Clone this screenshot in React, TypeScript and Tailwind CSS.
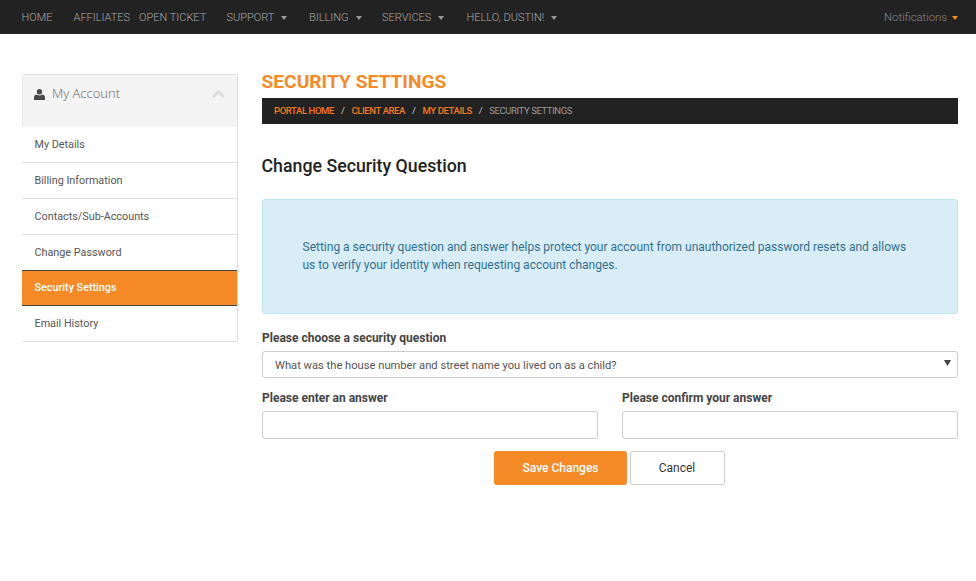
import React from "react";

const Caret = ({ c = "#999", ml = 7 }: { c?: string; ml?: number }) => (
  <span className="inline-block align-middle w-0 h-0 border-t-[4px] border-x-[3.5px] border-x-transparent" style={{ borderTopColor: c, marginLeft: ml }} />
);

const side = ["My Details", "Billing Information", "Contacts/Sub-Accounts"];
const rowText = "flex items-center pl-[12.500px] pt-[2px] text-[10.800px] text-[#555]";

export default function App() {
  return (
    <div className="w-[976px] h-[581px] bg-white overflow-hidden font-['Roboto','Liberation_Sans',sans-serif] text-[#333]">
      <header className="h-[34px] bg-[#222] flex items-center justify-between pl-[21.500px] pr-[18px] pt-[2px] text-[11px] font-light text-[#a8a8a8]">
        <nav className="flex">
          <span className="w-[52px]">HOME</span>
          <span className="w-[65.500px]">AFFILIATES</span>
          <span className="w-[87.500px]">OPEN TICKET</span>
          <span className="w-[82.500px]">SUPPORT<Caret /></span>
          <span className="w-[73px]">BILLING<Caret /></span>
          <span className="w-[84.500px]">SERVICES<Caret /></span>
          <span>HELLO, DUSTIN!<Caret /></span>
        </nav>
        <span className="text-[11.300px] text-[#888]">Notifications<Caret c="#f68b25" ml={5} /></span>
      </header>
      <div className="flex pl-[22px] pr-[18px] pt-[40px] gap-[24px]">
        <aside className="w-[216px] shrink-0">
          <div className="border-y border-r border-y-[#ddd] border-r-[#ddd] rounded-[3px] overflow-hidden">
            <div className="h-[52px] bg-[#f4f4f4] border-l border-[#e4e4e4] flex items-start justify-between pl-[11px] pr-[12px] pt-[12px] text-[13px] font-['Open_Sans',sans-serif] font-light text-[#666]">
              <span className="flex items-center gap-[7px] h-[14px]">
                <svg width="11" height="11" viewBox="0 0 11 11" fill="#4a4a4a"><ellipse cx="5.500" cy="2.800" rx="2.700" ry="2.800" /><path d="M0 11V8.500C0 6.800 1.200 5.800 2.500 5.500c.8.700 1.900 1 3 1s2.200-.3 3-1C9.800 5.800 11 6.800 11 8.500V11z" /></svg>
                My Account
              </span>
              <svg className="mt-[3px] ml-[-1px]" width="13" height="8" viewBox="0 0 13 8" fill="none" stroke="#dcdcdc" strokeWidth="2.800"><path d="M1 7l5.500-5.200L12 7" /></svg>
            </div>
            {side.map((s) => (
              <div key={s} className={`h-[36px] border-b border-[#ddd] ${rowText}`}>{s}</div>
            ))}
            <div className={`h-[36px] border-b border-[#444] ${rowText}`}>Change Password</div>
            <div className="h-[35px] bg-[#f58a27] border-b border-[#444] flex items-center pl-[12.500px] text-[10.800px] font-medium text-white">Security Settings</div>
            <div className={`h-[35px] ${rowText}`}>Email History</div>
          </div>
        </aside>
        <main className="flex-1 min-w-0">
          <h1 className="text-[19.200px] leading-[24px] font-bold text-[#f58a27] mt-[-4px] ml-[-0.500px]">SECURITY SETTINGS</h1>
          <div className="h-[26px] mt-[4px] bg-[#222] flex items-center pl-[12px] text-[9.500px] tracking-[-0.400px]">
            <span className="text-[#f47b20] font-medium">PORTAL HOME</span><span className="text-[#ccc] mx-[7px]">/</span>
            <span className="text-[#f47b20] font-medium">CLIENT AREA</span><span className="text-[#ccc] mx-[7px]">/</span>
            <span className="text-[#f47b20] font-medium">MY DETAILS</span><span className="text-[#ccc] mx-[7px]">/</span>
            <span className="text-[#999]">SECURITY SETTINGS</span>
          </div>
          <h2 className="mt-[31px] ml-[-0.500px] text-[17.750px] leading-[22px] font-medium text-[#222]">Change Security Question</h2>
          <div className="mt-[22px] h-[115px] bg-[#d9edf7] border border-[#bce8f1] rounded-[3px] flex items-center pl-[39.500px] pr-[50px] pb-[2px] text-[12px] leading-[18px] text-[#31708f]">
            Setting a security question and answer helps protect your account from unauthorized password resets and allows us to verify your identity when requesting account changes.
          </div>
          <label className="block mt-[16px] text-[12px] font-bold leading-[16px] text-[#444]">Please choose a security question</label>
          <div className="mt-[5px] h-[27px] border border-[#ccc] rounded-[3px] flex items-center justify-between pl-[12px] pr-[6px] pt-[3px] text-[11.180px] text-[#555]">
            What was the house number and street name you lived on as a child?
            <svg width="7" height="6" viewBox="0 0 7 6" fill="#444" className="mb-[6px]"><path d="M0 0h7L3.500 6z" /></svg>
          </div>
          <div className="mt-[12px] grid grid-cols-2 gap-[24px]">
            <div>
              <label className="block text-[12px] font-bold leading-[16px] text-[#444]">Please enter an answer</label>
              <div className="mt-[5px] h-[28px] border border-[#ccc] rounded-[3px]" />
            </div>
            <div>
              <label className="block text-[12px] font-bold leading-[16px] text-[#444]">Please confirm your answer</label>
              <div className="mt-[5px] h-[28px] border border-[#ccc] rounded-[3px]" />
            </div>
          </div>
          <div className="mt-[12px] flex justify-center gap-[3px] text-[12px] pr-[2px]">
            <button className="w-[133px] h-[34px] bg-[#f58a27] rounded-[3px] text-white font-medium pl-[1px] pb-[1px]">Save Changes</button>
            <button className="w-[95px] h-[34px] border border-[#ccc] rounded-[3px] text-[#333] pb-[1px]">Cancel</button>
          </div>
        </main>
      </div>
    </div>
  );
}
